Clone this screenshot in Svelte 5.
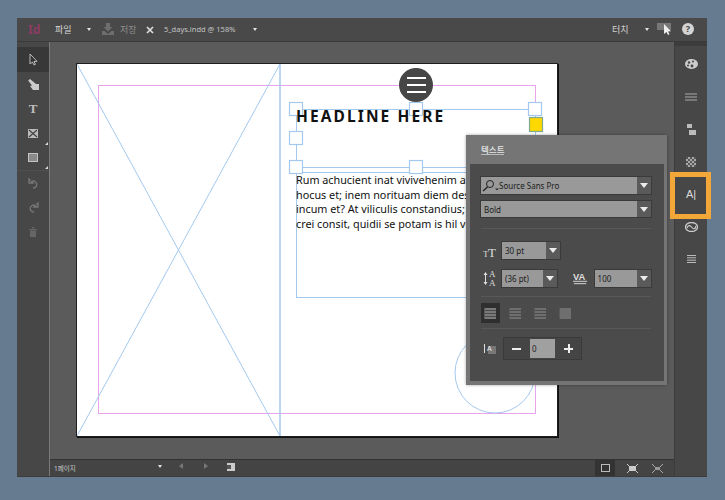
<script>
	let rightTools = ['palette', 'lines', 'pages', 'swatch', 'text', 'cc', 'list'];
	let bodyLines = [
		'Rum achucient inat vivivehenim atam',
		'hocus et; inem norituam diem descie',
		'incum et? At viliculis constandius; in l',
		'crei consit, quidii se potam is hil vo,'
	];
	let handles = [[297,109],[417,109],[536,109],[297,138],[297,167],[417,167],[536,167]];
</script>

<div class="stage">
	<div class="window">
		<header class="titlebar">
			<span class="logo">Id</span>
			<span class="menu">파일</span>
			<span class="caret c1"></span>
			<svg class="dl" width="14" height="14" viewBox="0 0 14 14"><path d="M5 1h4v4h2.500L7 9.500 2.500 5H5z" fill="#6e6e6e"/><path d="M1 9h2.500L7 12l3.500-3H13v4H1z" fill="#6e6e6e"/></svg>
			<span class="save">저장</span>
			<svg class="close" width="8" height="8" viewBox="0 0 8 8"><path d="M1 1l6 6M7 1L1 7" stroke="#ddd" stroke-width="1.700"/></svg>
			<span class="file">5_days.indd @ 158%</span>
			<span class="caret c2"></span>
			<span class="touch">터치</span>
			<span class="caret c3"></span>
			<svg class="pointer" width="15" height="12" viewBox="0 0 15 12"><rect x="0" y="0" width="14" height="7" fill="#777"/><path d="M7 1l0 10 2.500-2 1.500 3 1.500-.7-1.500-2.800 3-.2z" fill="#eee"/></svg>
			<span class="help">?</span>
		</header>

		<div class="middle">
			<aside class="tools">
				<div class="tool selected">
					<svg width="11" height="13" viewBox="0 0 11 13"><path d="M2 1v10l2.500-2 1.500 3 1.500-.7L6 8.500l3-.2z" fill="#333" stroke="#bbb"/></svg>
				</div>
				<div class="tool">
					<svg width="13" height="13" viewBox="0 0 13 13"><path d="M3 1l6 5h3v6H6L3 8l2-.5L1.500 3z" fill="#ccc"/><path d="M1 3l2-2" stroke="#999"/></svg>
				</div>
				<div class="tool"><span class="t-glyph">T</span></div>
				<div class="tool corner">
					<svg width="10" height="9" viewBox="0 0 10 9"><rect width="10" height="9" fill="#bbb"/><path d="M1 1l8 7M9 1L1 8" stroke="#444" stroke-width="1.200"/></svg>
				</div>
				<div class="tool corner rule">
					<svg width="10" height="9" viewBox="0 0 10 9"><rect width="10" height="9" fill="#c4c4c4"/><rect x="1" y="1" width="8" height="7" fill="#8a8a8a"/></svg>
				</div>
				<div class="tool">
					<svg width="11" height="11" viewBox="0 0 11 11"><path d="M2.500 2.500L1 1v4h4L3.500 3.500A3.500 3.500 0 1 1 5 10" fill="none" stroke="#777" stroke-width="1.300"/></svg>
				</div>
				<div class="tool">
					<svg width="11" height="11" viewBox="0 0 11 11"><path d="M8.500 2.500L10 1v4H6l1.500-1.500A3.500 3.500 0 1 0 6 10" fill="none" stroke="#777" stroke-width="1.300"/></svg>
				</div>
				<div class="tool">
					<svg width="8" height="10" viewBox="0 0 8 10"><path d="M0 2h8v1H0zM3 0h2v1.500H3zM1 3.500h6V10H1z" fill="#666"/></svg>
				</div>
			</aside>

			<main class="canvas-wrap">
				<div class="canvas">
					<div class="page">
						<div class="headline">HEADLINE HERE</div>
						<div class="body-text">
							{#each bodyLines as line}
								<div>{line}</div>
							{/each}
						</div>
						<svg class="guides" width="480" height="372" viewBox="78 64 480 372">
							<rect x="99.500" y="85.500" width="437" height="328" fill="none" stroke="#e8a4ea"/>
							<path d="M78 64L281 436M281 64L78 436" stroke="#a3c9ee" fill="none"/>
							<path d="M281 64v372" stroke="#a3c9ee" stroke-width="1.500"/>
							<circle cx="496" cy="373" r="40" fill="none" stroke="#a3c9ee"/>
							<rect x="297.500" y="109.500" width="239" height="58" fill="none" stroke="#a3c9ee"/>
							<rect x="297.500" y="172.500" width="239" height="125" fill="none" stroke="#a3c9ee"/>
							{#each handles as h}
								<rect x={h[0] - 6.500} y={h[1] - 6.500} width="13" height="13" fill="#fff" stroke="#a3c9ee" stroke-width="1.200"/>
							{/each}
							<rect x="530.500" y="117.500" width="13" height="14" fill="#ffd800" stroke="#7fa98f" stroke-width="1.200"/>
						</svg>
						<button class="hamburger" aria-label="menu"><i></i><i></i><i></i></button>
					</div>

					<section class="panel">
						<div class="panel-head"><span>텍스트</span></div>
						<div class="panel-body">
							<div class="select font">
								<svg width="18" height="13" viewBox="0 0 18 13"><circle cx="8" cy="5" r="3.500" fill="none" stroke="#222"/><path d="M5.500 8L1 12" stroke="#222" stroke-width="1.300"/><path d="M13 9.500h4l-2 1.800z" fill="#222"/></svg>
								<span class="val">Source Sans Pro</span>
								<span class="drop"></span>
							</div>
							<div class="select bold">
								<span class="val">Bold</span>
								<span class="drop"></span>
							</div>
							<hr class="first" />
							<div class="row size">
								<svg class="ico" width="15" height="15" viewBox="0 0 15 15"><text x="5" y="14" class="svgt big">T</text><text x="0" y="14" class="svgt small">T</text></svg>
								<div class="select short"><span class="val">30 pt</span><span class="drop"></span></div>
							</div>
							<div class="row lead">
								<svg class="ico" width="15" height="18" viewBox="0 0 15 18"><text x="6" y="8" class="svgt small">A</text><text x="6" y="17" class="svgt small">A</text><path d="M2.500 4v11" stroke="#ddd"/><path d="M0.500 6l2-3 2 3zM0.500 13l2 3 2-3z" fill="#ddd"/></svg>
								<div class="select short"><span class="val">(36 pt)</span><span class="drop"></span></div>
								<svg class="va" width="16" height="16" viewBox="0 0 16 16"><text x="0" y="10" class="svgt va-t">VA</text><path d="M0 11.500h15" stroke="#ddd"/><path d="M1 14h13" stroke="#ddd"/></svg>
								<div class="select kern"><span class="val">100</span><span class="drop"></span></div>
							</div>
							<hr class="second" />
							<div class="aligns">
								<div class="al on"><i class="b1"></i></div>
								<div class="al"><i></i></div>
								<div class="al"><i></i></div>
								<div class="al"><i class="plain"></i></div>
							</div>
							<hr class="third" />
							<div class="row last">
								<svg class="ico" width="13" height="11" viewBox="0 0 13 11"><rect x="5" y="3" width="8" height="8" fill="#777"/><path d="M1.500 1v9" stroke="#ddd"/><text x="4" y="8" class="svgt tiny">A</text></svg>
								<div class="stepper">
									<span class="minus"></span>
									<span class="num">0</span>
									<span class="plus"></span>
								</div>
							</div>
						</div>
					</section>
				</div>
				<footer class="status">
					<span class="page-no">1페이지</span>
					<span class="caret s1"></span>
					<span class="arrow left"></span>
					<span class="arrow right"></span>
					<svg class="pg" width="8" height="8" viewBox="0 0 8 8"><rect width="8" height="8" fill="#ccc"/><rect x="0" y="2" width="4" height="4" fill="#555"/></svg>
					<div class="view active"><span></span></div>
					<div class="view"><svg width="11" height="9" viewBox="0 0 11 9"><rect x="2" y="2" width="7" height="5" fill="#ccc"/><path d="M0 0l3 3M11 0L8 3M0 9l3-3M11 9L8 6" stroke="#ccc"/></svg></div>
					<div class="view"><svg width="11" height="9" viewBox="0 0 11 9"><rect x="3" y="3" width="5" height="3" fill="#999"/><path d="M0 0l3 3M11 0L8 3M0 9l3-3M11 9L8 6" stroke="#aaa"/></svg></div>
				</footer>
			</main>

			<aside class="dock">
				{#each rightTools as t}
					<div class="dock-item">
						{#if t === 'palette'}
							<svg width="13" height="10" viewBox="0 0 13 10"><ellipse cx="6.500" cy="5" rx="6.500" ry="5" fill="#ccc"/><circle cx="4" cy="3.500" r="1.200" fill="#444"/><circle cx="8" cy="2.500" r="1" fill="#444"/><circle cx="3" cy="6.500" r="1" fill="#444"/><circle cx="7" cy="7" r="1.400" fill="#444"/></svg>
						{:else if t === 'lines'}
							<svg width="12" height="8" viewBox="0 0 12 8"><path d="M0 1h12M0 4h12M0 7h12" stroke="#aaa"/></svg>
						{:else if t === 'pages'}
							<svg width="9" height="11" viewBox="0 0 9 11"><path d="M0 0h5v4H0zM2 6h7v5H2z" fill="#bbb"/></svg>
						{:else if t === 'swatch'}
							<svg width="10" height="10" viewBox="0 0 10 10"><rect width="10" height="10" fill="#aaa"/><path d="M0 0h2v2H0zM4 0h2v2H4zM8 0h2v2H8zM2 2h2v2H2zM6 2h2v2H6zM0 4h2v2H0zM4 4h2v2H4zM8 4h2v2H8zM2 6h2v2H2zM6 6h2v2H6zM0 8h2v2H0zM4 8h2v2H4zM8 8h2v2H8z" fill="#555"/></svg>
						{:else if t === 'text'}
							<span class="a-bar">A|</span>
						{:else if t === 'cc'}
							<svg width="13" height="10" viewBox="0 0 13 10"><ellipse cx="6.500" cy="5" rx="6" ry="4.500" fill="none" stroke="#ccc" stroke-width="1.300"/><path d="M2 6c1-3 3-3 4.500-1S10 8 11 4" fill="none" stroke="#ccc" stroke-width="1.200"/></svg>
						{:else}
							<svg width="9" height="8" viewBox="0 0 9 8"><path d="M0 .5h9M0 2.800h9M0 5.200h9M0 7.500h9" stroke="#bbb"/></svg>
						{/if}
					</div>
				{/each}
			</aside>
		</div>
	</div>
	<div class="highlight"></div>
</div>

<style>
	:global(body) {
		margin: 0;
		background: #667b8f;
	}
	.stage {
		position: relative;
		width: 725px;
		height: 500px;
		padding: 18px 18px 24px 17px;
		box-sizing: border-box;
		font-family: "Noto Sans", "Noto Sans CJK KR", sans-serif;
		overflow: hidden;
	}
	.window {
		height: 458px;
		display: flex;
		flex-direction: column;
		background: #474747;
		box-shadow: 0 1px 0 #3c3c3c;
	}
	.titlebar {
		position: relative;
		flex: 0 0 23px;
		background: #494949;
		border-bottom: 1px solid #3a3a3a;
		color: #ddd;
	}
	.titlebar > * {
		position: absolute;
	}
	.logo { left: 11px; top: 3px; font-size: 12px; font-weight: 700; color: #8c3a62; }
	.menu { left: 38px; top: 5px; font-size: 9px; color: #d8d8d8; }
	.save { left: 103px; top: 5px; font-size: 9px; color: #8e8e8e; }
	.dl { left: 84px; top: 4px; }
	.close { left: 129px; top: 8px; }
	.file { left: 147px; top: 6px; font-size: 7.500px; color: #c4c4c4; white-space: nowrap; }
	.touch { left: 595px; top: 5px; font-size: 9px; color: #d8d8d8; }
	.pointer { left: 640px; top: 5px; }
	.help {
		left: 665px;
		top: 5px;
		width: 12px;
		height: 12px;
		border-radius: 50%;
		background: #d4d4d4;
		color: #444;
		font-size: 9px;
		font-weight: 700;
		line-height: 12px;
		text-align: center;
	}
	.caret {
		width: 0;
		height: 0;
		border-left: 2.500px solid transparent;
		border-right: 2.500px solid transparent;
		border-top: 3px solid #e4e4e4;
	}
	.c1 { left: 70px; top: 10px; }
	.c2 { left: 236px; top: 10px; }
	.c3 { left: 628px; top: 10px; }

	.middle {
		flex: 1;
		display: flex;
		min-height: 0;
	}
	.tools {
		flex: 0 0 33px;
		padding-top: 5px;
		background: #474747;
		border-right: 1px solid #7a7a7a;
		box-sizing: content-box;
		width: 32px;
		flex-basis: 32px;
	}
	.tool {
		position: relative;
		height: 24.500px;
		display: flex;
		align-items: center;
		justify-content: center;
	}
	.tool.selected { background: #383838; height: 25px; }
	.tool.corner::after {
		content: '';
		position: absolute;
		right: 1px;
		bottom: 1px;
		border-left: 3px solid transparent;
		border-bottom: 3px solid #ddd;
	}
	.tool.rule { border-bottom: 1px solid #4f4f4f; }
	.t-glyph {
		font-family: "Liberation Serif", serif;
		font-size: 13px;
		font-weight: 700;
		color: #bdbdbd;
	}

	.canvas-wrap {
		flex: 1;
		display: flex;
		flex-direction: column;
		min-width: 0;
	}
	.canvas {
		position: relative;
		flex: 1;
		background: #5b5b5b;
	}
	.page {
		position: absolute;
		left: 27px;
		top: 22px;
		width: 480px;
		height: 372px;
		background: #fff;
		box-shadow: 0 0 0 1px #1f1f1f, 1px 1px 0 1px #111;
		color: #111;
	}
	.guides {
		position: absolute;
		left: 0;
		top: 0;
	}
	.headline {
		position: absolute;
		left: 219px;
		top: 41px;
		font-size: 15.500px;
		line-height: 22px;
		font-weight: 700;
		letter-spacing: 2.100px;
		color: #111;
		white-space: nowrap;
		z-index: 1;
	}
	.body-text {
		position: absolute;
		left: 219px;
		top: 109px;
		font-size: 10.800px;
		line-height: 14.700px;
		white-space: nowrap;
		z-index: 1;
	}
	.hamburger {
		position: absolute;
		left: 322px;
		top: 4px;
		width: 34px;
		height: 34px;
		padding: 0;
		border: 0;
		border-radius: 50%;
		background: #464646;
		display: flex;
		flex-direction: column;
		align-items: center;
		justify-content: center;
		gap: 5px;
		z-index: 2;
	}
	.hamburger i {
		display: block;
		width: 19px;
		height: 2px;
		background: #fff;
	}

	.panel {
		position: absolute;
		left: 416px;
		top: 93px;
		width: 201px;
		height: 250px;
		background: #757575;
		box-shadow: 0 0 3px rgba(0,0,0,.35);
		padding: 0 3px 4px 4px;
		box-sizing: border-box;
		display: flex;
		flex-direction: column;
		z-index: 3;
	}
	.panel-head {
		flex: 0 0 29px;
		display: flex;
		align-items: center;
		padding-left: 11px;
		color: #e6e6e6;
		font-size: 8.500px;
		font-weight: 500;
	}
	.panel-head span { border-bottom: 1px solid #bbb; line-height: 9px; }
	.panel-body {
		flex: 1;
		background: #4b4b4b;
		padding: 13px 13px 0 11px;
		display: flex;
		flex-direction: column;
	}
	.select {
		position: relative;
		display: flex;
		align-items: center;
		background: #999;
		height: 17px;
		box-shadow: 0 0 0 1px #3a3a3a;
		padding-right: 14px;
		color: #1c1c1c;
		font-size: 8px;
	}
	.select .val { padding-left: 3px; white-space: nowrap; }
	.select.font svg { margin-left: 1px; }
	.select.font .val { padding-left: 0; margin-left: -1px; }
	.select.bold { margin-top: 7px; height: 16px; }
	.drop {
		position: absolute;
		right: 0;
		top: 0;
		bottom: 0;
		width: 14px;
		background: #5a5a5a;
	}
	.drop::after {
		content: '';
		position: absolute;
		left: 3px;
		top: 6px;
		border-left: 4px solid transparent;
		border-right: 4px solid transparent;
		border-top: 5px solid #ececec;
	}
	hr {
		width: 100%;
		border: 0;
		height: 1px;
		background: #585858;
		margin: 0;
	}
	hr.first { margin-top: 11px; }
	hr.second { margin-top: 9px; }
	hr.third { margin-top: 5px; }
	.row {
		display: flex;
		align-items: center;
	}
	.ico { flex: 0 0 auto; margin-left: 2px; }
	.row.size { margin-top: 13px; gap: 4px; }
	.row.lead { margin-top: 10px; gap: 4px; }
	.select.short { width: 44px; }
	.va { margin-left: 12px; }
	.select.kern { width: 45px; margin-left: 2px; }
	.svgt { fill: #ddd; font-family: "Liberation Serif", serif; }
	.big { font-size: 13px; }
	.small { font-size: 9px; }
	.va-t { font-family: "Liberation Sans", sans-serif; font-size: 10px; font-weight: 700; }
	.tiny { font-size: 7px; fill: #eee; font-family: "Liberation Sans", sans-serif; }
	.aligns {
		display: flex;
		gap: 6px;
		margin-top: 6px;
		height: 20px;
		padding-right: 0;
	}
	.al {
		width: 19px;
		height: 20px;
		display: flex;
		align-items: center;
		justify-content: center;
	}
	.al i {
		display: block;
		width: 11px;
		height: 11px;
		background: #6f6f6f;
		box-shadow: -1px 0 0 #5a5a5a;
		background-image: repeating-linear-gradient(0deg, transparent 0 2px, #4b4b4b 2px 3px);
		background-size: 100% 100%;
	}
	.al i.plain { background-image: none; }
	.al.on { background: #2f2f2f; }
	.al.on i { background-color: #7a7a7a; }
	.row.last { margin-top: 8px; gap: 7px; }
	.stepper {
		display: flex;
		align-items: center;
		width: 79px;
		height: 23px;
		background: #454545;
		box-shadow: inset 0 0 0 1px #3a3a3a;
	}
	.minus, .plus {
		position: relative;
		flex: 1;
		height: 100%;
	}
	.minus::before, .plus::before {
		content: '';
		position: absolute;
		left: 50%;
		top: 50%;
		width: 9px;
		height: 2px;
		margin: -1px 0 0 -4.500px;
		background: #eee;
	}
	.plus::after {
		content: '';
		position: absolute;
		left: 50%;
		top: 50%;
		width: 2px;
		height: 9px;
		margin: -4.500px 0 0 -1px;
		background: #eee;
	}
	.num {
		flex: 0 0 25px;
		height: 19px;
		background: #a0a0a0;
		color: #222;
		font-size: 8px;
		line-height: 19px;
		padding-left: 2px;
		box-sizing: border-box;
	}

	.status {
		position: relative;
		flex: 0 0 16px;
		background: #444;
		border-top: 1px solid #333;
		color: #c8c8c8;
		display: flex;
		align-items: center;
		justify-content: flex-end;
		padding-right: 4px;
	}
	.page-no {
		position: absolute;
		left: 4px;
		top: 4px;
		font-size: 6.500px;
		line-height: 10px;
	}
	.s1 { position: absolute; left: 108px; top: 5px; }
	.arrow {
		position: absolute;
		top: 3px;
		border-top: 3px solid transparent;
		border-bottom: 3px solid transparent;
	}
	.arrow.left { left: 129px; border-right: 4px solid #777; }
	.arrow.right { left: 154px; border-left: 4px solid #777; }
	.pg { position: absolute; left: 177px; top: 3px; }
	.view {
		width: 25px;
		height: 16px;
		display: flex;
		align-items: center;
		justify-content: center;
	}
	.view.active {
		width: 20px;
		background: #333;
		margin-right: 5px;
	}
	.view.active span {
		width: 7px;
		height: 6px;
		border: 1px solid #bbb;
	}

	.dock {
		flex: 0 0 33px;
		background: #474747;
		border-left: 1px solid #3c3c3c;
		border-top: 4px solid #3c3c3c;
		padding-top: 2px;
		display: flex;
		flex-direction: column;
		box-sizing: border-box;
	}
	.dock-item {
		height: 32.500px;
		display: flex;
		align-items: center;
		justify-content: center;
		flex: 0 0 32.500px;
	}
	.a-bar {
		font-family: "Liberation Sans", sans-serif;
		font-size: 11px;
		color: #ddd;
	}
	.highlight {
		position: absolute;
		left: 670px;
		top: 172px;
		width: 41px;
		height: 47px;
		box-sizing: border-box;
		border: 5px solid #f3a738;
	}
</style>
